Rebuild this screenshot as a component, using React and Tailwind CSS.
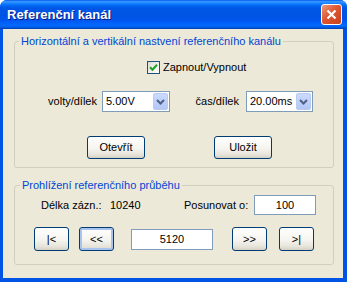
import React from "react";

// XP-style push button
function Btn({ className = "", focused = false, children }) {
  return (
    <button
      className={`shrink-0 rounded-[3px] border border-[#003C74] bg-[linear-gradient(180deg,#FFFFFF_0%,#F5F4EF_55%,#E6E3D9_85%,#D6D0C5_100%)] text-[11px] leading-none text-black ${
        focused ? "shadow-[inset_0_0_0_2px_#A8C3EE]" : ""
      } ${className}`}
    >
      {children}
    </button>
  );
}

function Combo({ value, className = "" }) {
  return (
    <div
      className={`h-[21px] shrink-0 border border-[#7F9DB9] bg-white flex items-center justify-between pl-[3px] pr-px ${className}`}
    >
      <span>{value}</span>
      <span className="w-[15px] h-[17px] rounded-[2px] border border-[#B9CBF3] bg-[linear-gradient(180deg,#CBDAFD,#B3C7F6)] flex items-center justify-center">
        <svg width="9" height="6" viewBox="0 0 9 6">
          <path d="M1 1 L4.5 4.5 L8 1" stroke="#4D6185" strokeWidth="2" fill="none" />
        </svg>
      </span>
    </div>
  );
}

function Field({ value, className = "" }) {
  return (
    <div
      className={`shrink-0 border border-[#7F9DB9] bg-white flex items-center justify-center ${className}`}
    >
      {value}
    </div>
  );
}

export default function App() {
  return (
    <div className="w-[347px] h-[282px] bg-white font-['Liberation_Sans',Arial,sans-serif] text-[11px] text-black">
      <div className="w-full h-full flex flex-col rounded-t-[7px] overflow-hidden bg-[#0054E3]">
        {/* Title bar */}
        <div className="h-[29px] shrink-0 flex items-center justify-between pl-[7px] pr-[5px] bg-[linear-gradient(180deg,#0058EE_0%,#3593FF_5%,#288EFF_9%,#127DFF_13%,#036FFC_17%,#0262EE_22%,#0057E5_28%,#0054E3_56%,#0055EB_66%,#005BF5_76%,#026AFE_86%,#0062EF_92%,#0052D6_96%,#0040AB_100%)]">
          <span className="text-white font-bold text-[13px] leading-none [text-shadow:1px_1px_0_#0A1883]">
            Referenční kanál
          </span>
          <div className="w-[21px] h-[21px] rounded-[3px] border border-white bg-[linear-gradient(135deg,#EE9A7C_0%,#DF5730_45%,#C8401D_100%)] flex items-center justify-center">
            <svg width="11" height="11" viewBox="0 0 11 11">
              <path d="M1.5 1.5 L9.5 9.5 M9.5 1.5 L1.5 9.5" stroke="#FFFFFF" strokeWidth="2.2" />
            </svg>
          </div>
        </div>

        {/* Client area */}
        <div className="flex-1 ml-[3px] mr-[4px] mb-[4px] bg-[#ECE9D8] pl-[11px] pt-[6px]">
          {/* Group 1 */}
          <fieldset className="w-[320px] border border-[#D0D0BF] rounded-[3px] p-0 pb-[8px]">
            <legend className="ml-[4px] px-[2px] leading-[13px] text-[#0046D5]">
              Horizontální a vertikální nastvení referenčního kanálu
            </legend>
            <div className="mt-[13px] ml-[132px] h-[13px] flex items-center gap-[3px]">
              <span className="w-[13px] h-[13px] border border-[#1C5180] bg-[linear-gradient(135deg,#DCDCD7,#FFFFFF)] flex items-center justify-center">
                <svg width="9" height="9" viewBox="0 0 9 9">
                  <path d="M1 4.2 L3.5 6.7 L8 1.8" stroke="#21A121" strokeWidth="2" fill="none" />
                </svg>
              </span>
              <span>Zapnout/Vypnout</span>
            </div>
            <div className="mt-[17px] flex items-center">
              <span className="w-[82px] text-right">volty/dílek</span>
              <Combo value="5.00V" className="ml-[5px] w-[68px]" />
              <span className="w-[69px] text-right">čas/dílek</span>
              <Combo value="20.00ms" className="ml-[7px] w-[67px]" />
            </div>
            <div className="mt-[24px] flex">
              <Btn className="ml-[72px] w-[58px] h-[23px]">Otevřít</Btn>
              <Btn className="ml-[69px] w-[58px] h-[23px]">Uložit</Btn>
            </div>
          </fieldset>

          {/* Group 2 */}
          <fieldset className="mt-[11px] w-[320px] border border-[#D0D0BF] rounded-[3px] p-0 pb-[13px]">
            <legend className="ml-[5px] px-[2px] leading-[13px] text-[#0046D5]">
              Prohlížení referenčního průběhu
            </legend>
            <div className="mt-[3px] flex items-center">
              <span className="ml-[26px] w-[69px]">Délka zázn.:</span>
              <span className="w-[74px]">10240</span>
              <span className="w-[70px]">Posunovat o:</span>
              <Field value="100" className="w-[62px] h-[20px]" />
            </div>
            <div className="mt-[12px] flex items-center">
              <Btn className="ml-[19px] w-[35px] h-[24px]">{"|<"}</Btn>
              <Btn focused className="ml-[10px] w-[35px] h-[24px]">{"<<"}</Btn>
              <Field value="5120" className="ml-[17px] w-[82px] h-[21px]" />
              <Btn className="ml-[19px] w-[35px] h-[24px]">{">>"}</Btn>
              <Btn className="ml-[12px] w-[35px] h-[24px]">{">|"}</Btn>
            </div>
          </fieldset>
        </div>
      </div>
    </div>
  );
}
